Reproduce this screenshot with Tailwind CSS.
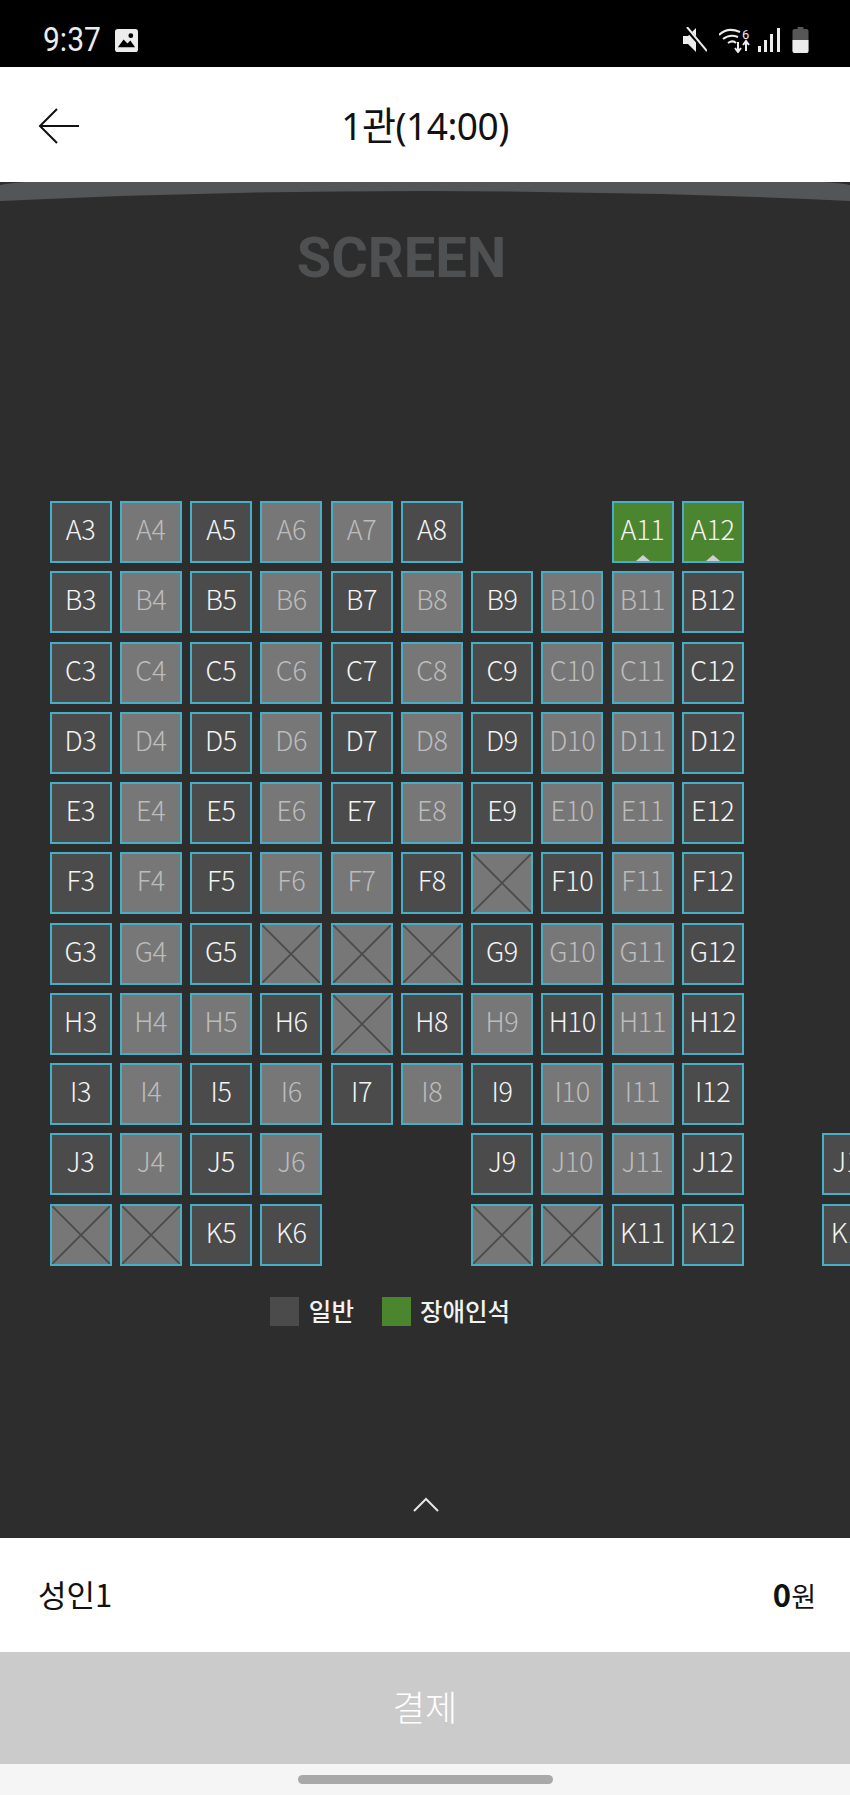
<!DOCTYPE html>
<html lang="ko">
<head>
    <meta charset="UTF-8">
    <title>좌석 선택</title>
    <script src="https://cdn.jsdelivr.net/npm/@tailwindcss/browser@4"></script>
</head>
<body class="bg-[#2d2d2d]">
    <div class="w-[850px] h-[1795px] flex flex-col overflow-hidden font-['Noto_Sans_CJK_KR','Noto_Sans',sans-serif]">
        <!-- status bar -->
        <div class="h-[67px] bg-black flex items-center justify-between pt-[13px] pl-[43px] pr-[41px] text-[#ececec]">
            <div class="flex items-center gap-[14px]">
                <span class="font-['Roboto',sans-serif] text-[30px] leading-none scale-y-[1.12]">9:37</span>
                <svg width="23" height="23" viewBox="0 0 24 24"><rect x="0" y="0" width="24" height="24" rx="3" fill="#ececec"/><circle cx="16.5" cy="7" r="2.5" fill="#000"/><path d="M3 19l6-8 4 4 3-3 5 7z" fill="#000"/></svg>
            </div>
            <div class="flex items-center">
                <svg class="mr-[12px]" width="24" height="26" viewBox="0 0 24 26"><path d="M0 9h5l8-8v24l-8-8H0z" fill="#ececec"/><path d="M2 0l22 25" stroke="#000" stroke-width="4"/><path d="M4 0l20 24" stroke="#ececec" stroke-width="2"/></svg>
                <svg class="mr-[8px]" width="31" height="26" viewBox="0 0 31 26" fill="none" stroke="#ececec" stroke-width="2"><path d="M0 8c6-6 14-6 21-3"/><path d="M4 12c5-4 10-4 15-2"/><path d="M9 16c3-2 6-2 8 0"/><path d="M19 15v9m-3-3l3 4 3-4M27 24v-9m-3 3l3-4 3 4"/><text x="23" y="12" font-size="13" fill="#ececec" stroke="none" font-family="Roboto">6</text></svg>
                <svg class="mr-[12px]" width="22" height="26" viewBox="0 0 22 26" fill="#ececec"><rect x="0" y="19" width="3" height="6"/><rect x="6" y="13" width="3" height="12"/><rect x="12" y="7" width="3" height="18"/><rect x="19" y="1" width="3" height="24"/></svg>
                <svg width="17" height="26" viewBox="0 0 17 26"><path d="M5.5 0h6v2h3a2 2 0 012 2v20a2 2 0 01-2 2H2.500a2 2 0 01-2-2V4a2 2 0 012-2h3z" fill="#565656"/><path d="M.5 13h16v11a2 2 0 01-2 2H2.500a2 2 0 01-2-2z" fill="#ececec"/></svg>
            </div>
        </div>

        <!-- header -->
        <div class="relative h-[115px] bg-white flex items-center justify-center">
            <svg class="absolute left-[38px] top-[41px]" width="41" height="36" viewBox="0 0 41 36" fill="none" stroke="#111" stroke-width="2"><path d="M19 1L2 18l17 17M2 18h39"/></svg>
            <h1 class="font-['Noto_Sans','Noto_Sans_CJK_KR',sans-serif] text-[37px] font-normal leading-none text-[#111] tracking-[-0.5px] scale-y-[1.04]">1관(14:00)</h1>
        </div>

        <!-- seat map -->
        <div class="relative flex-1 bg-[#2d2d2d] overflow-hidden">
            <svg class="absolute left-0 top-0" width="850" height="22" viewBox="0 0 850 22"><path d="M0 0h850v19Q425-1 0 19z" fill="#545556"/><path d="M0 0h26Q10 1 0 3zM850 0h-26Q840 1 850 3z" fill="#2d2d2d"/></svg>
            <div class="pt-[46px] pr-[47px] text-center font-['Roboto',sans-serif] font-bold text-[56px] leading-[60px] text-[#4f5052]">SCREEN</div>
            <div id="seats" class="mt-[213px] ml-[49.5px] grid grid-cols-[repeat(13,62px)] auto-rows-[62px] gap-[8.25px] w-[900px]"></div>
            <div class="mt-[31px] flex justify-center items-center pr-[70px] text-[#f2f2f2] text-[24.5px] font-medium leading-none">
                <span class="w-[29px] h-[29px] bg-[#4b4b4b]"></span>
                <span class="ml-[10px] mr-[28px]">일반</span>
                <span class="w-[29px] h-[29px] bg-[#4c8530]"></span>
                <span class="ml-[9px]">장애인석</span>
            </div>
            <svg class="absolute left-[413px] top-[1315px]" width="26" height="15" viewBox="0 0 26 15" fill="none" stroke="#e5e5e5" stroke-width="2"><path d="M1 14L13 2l12 12"/></svg>
        </div>

        <!-- summary -->
        <div class="h-[114px] bg-white flex items-center justify-between pl-[38px] pr-[34px] pb-[4px] text-[#111] text-[31px] leading-none">
            <span>성인1</span>
            <span class="text-[27px]"><b class="text-[31px] font-bold">0</b>원</span>
        </div>
        <div class="h-[112px] bg-[#cbcbcb] flex items-center justify-center pb-[6px] text-white text-[35px] font-light leading-none">결제</div>
        <div class="h-[31px] bg-[#f5f5f5] flex items-center justify-center">
            <div class="w-[255px] h-[9px] rounded-full bg-[#a9a9a9]"></div>
        </div>
    </div>

    <script>
        // n = normal, g = taken, d = handicap, x = blocked, . = no seat
        const rows = {
            A: 'ngnggn..dd.',
            B: 'ngngngnggn.',
            C: 'ngngngnggn.',
            D: 'ngngngnggn.',
            E: 'ngngngnggn.',
            F: 'ngnggnxngn.',
            G: 'ngnxxxnggn.',
            H: 'nggnxngngn.',
            I: 'ngngngnggn.',
            J: 'ngng..nggn.n',
            K: 'xxnn..xxnn.n',
        };
        const seatStyle = {
            n: 'bg-[#4b4b4b] text-[#f4f4f4]',
            g: 'bg-[#777777] text-[#bcbcbc]',
            d: 'bg-[#4c8530] text-[#f4f4f4]',
            x: 'bg-[#777777]',
        };
        const cross = '<svg class="absolute inset-0" width="100%" height="100%" viewBox="0 0 58 58"><path d="M0 0L58 58M58 0L0 58" stroke="#4b4b4b" stroke-width="1.8"/></svg>';
        const notch = '<span class="absolute bottom-0 left-[22px] w-0 h-0 border-x-[7px] border-x-transparent border-b-[6px] border-b-[#cfcfcf]"></span>';

        let html = '';
        for (const [row, seats] of Object.entries(rows)) {
            for (let i = 0; i < 13; i++) {
                const kind = seats[i] || '.';
                if (kind === '.') { html += '<div></div>'; continue; }
                const label = kind === 'x' ? '' : row + (i + 3);
                html += `<div class="relative border-[2px] border-[#46afc6] flex items-center justify-center pb-[7px] text-[27px] font-light leading-none tracking-[-0.3px] ${seatStyle[kind]}">${kind === 'x' ? cross : ''}${label}${kind === 'd' ? notch : ''}</div>`;
            }
        }
        document.getElementById('seats').innerHTML = html;
    </script>
</body>
</html>
